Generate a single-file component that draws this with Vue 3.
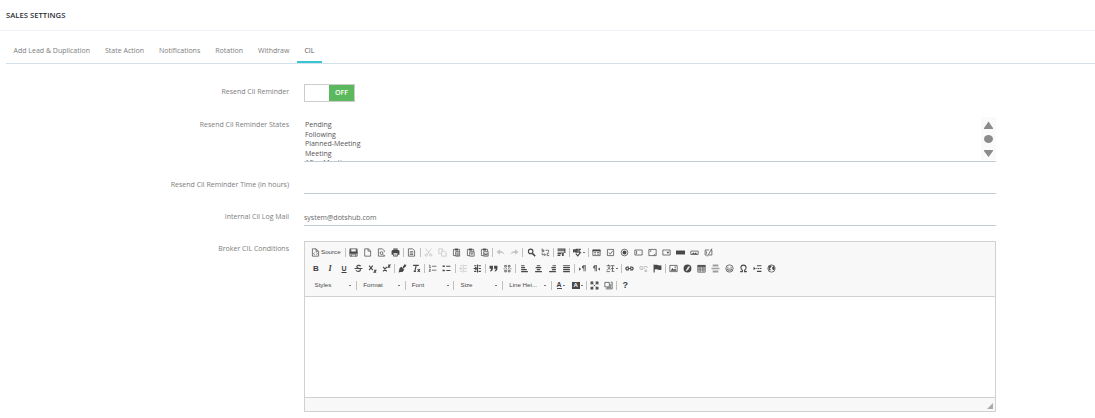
<script setup>
import { ref } from 'vue';

const tabs = ['Add Lead & Duplication', 'State Action', 'Notifications', 'Rotation', 'Withdraw', 'CIL'];
const activeTab = ref('CIL');
const states = ['Pending', 'Following', 'Planned-Meeting', 'Meeting', 'After-Meeting'];
const mail = ref('system@dotshub.com');

// s: stroked path, f: filled path, on a 16 unit grid
const icons = {
    source: { s: 'M9 1.5H2.5v13h11V6L9 1.5V6h4M6.5 8L4.5 10l2 2M9.5 8l2 2-2 2' },
    save: { s: 'M1.5 1.5h13v13h-13zM4 15v-4h8v4', f: 'M1 6h14v4H1zM2 2h2v4H2zM12 2h2v4h-2z' },
    newpage: { s: 'M3 1.5h6.5L13.5 5v9.5H3zM9 1.5V5.5h4' },
    preview: { s: 'M13 7V5L9.5 1.5h-7v13h11V13M10.5 9a2.5 2.5 0 1 1-5 0 2.5 2.5 0 0 1 5 0M10 11l3 3' },
    print: { s: 'M4.5 10v4.5h7V10M6 12.5h4', f: 'M4 1h8v2h-8zM1 5l2-1.5h10L15 5v7h-3V9.5H4V12H1z' },
    templates: { s: 'M2.5 1.5H10L13.5 5v9.5h-11zM5 6.5h6M5 9h6M5 11.5h6' },
    cut: { s: 'M3 1l7 10M13 1L6 11M6 12.5a2 2 0 1 1-4 0 2 2 0 0 1 4 0M14 12.5a2 2 0 1 1-4 0 2 2 0 0 1 4 0' },
    copy: { s: 'M5 10H1.5V1.5H8V5M6.5 5.5H12L14.5 8v6.5h-8z' },
    paste: { s: 'M5 2.5H2.5v11H6M11 2.5h2.5V6M6.5 6.5h7v8h-7zM8 9h4M8 11h4M8 13h4', f: 'M5 1h6v3.5H5z' },
    pastetext: { s: 'M5 2.5H2.5v11H6M11 2.5h2.5V6M6.5 6.5h8v8h-8zM8 9h5M10.5 9v4', f: 'M5 1h6v3.5H5z' },
    pasteword: { s: 'M5 2.5H2.5v11H6M11 2.5h2.5V6M6.5 6.5h8v8h-8zM8 9l1 4 1.5-3 1.5 3 1-4', f: 'M5 1h6v3.5H5z' },
    undo: { f: 'M1 7l6-5v3.5c4 0 7 2 8 6.5-2-2.5-4-3.5-8-3.5V12z' },
    redo: { f: 'M15 7L9 2v3.5C5 5.5 2 7.5 1 12c2-2.5 4-3.5 8-3.5V12z' },
    find: { s: 'M10.5 6a4 4 0 1 1-8 0 4 4 0 0 1 8 0', f: 'M8.5 10.5l2-2 5 5-2 2z', bold: true },
    replace: { s: 'M2 1v5.500h3V3.500H2M14.500 9h-3.500v4.500h3.500M2 8.500V12h5.500M5.500 9.500L8 12l-2.500 2.500M13.500 7V4H8' },
    selectall: { f: 'M1 1h14v2H1zM1 4h12v1.500H1zM1 6.500h12V8H1zM1 9h7v2H1zM1 12h5v2H1zM13 3h2v6h-2zM9 9h3v5H9z' },
    spell: { s: 'M1 8V3h3v5M1 5.500h3M6 2.500v5h2.500v-5zM14 2.500h-3v5h3M5 10l3.500 4L14 7' , bold: true },
    form: { s: 'M1.5 3.5h13v10h-13zM4 8h3M4 11h3M9 8h4M9 11h4', f: 'M1 3h14v3H1z' },
    checkbox: { s: 'M2.5 2.5h11v11h-11zM5 8l2.5 3L12 5' },
    radio: { s: 'M14 8A6 6 0 1 1 2 8a6 6 0 0 1 12 0', f: 'M11.5 8a3.5 3.5 0 1 1-7 0 3.5 3.5 0 0 1 7 0' },
    textfield: { s: 'M1.5 3.5h13v9h-13zM4.5 5v6' },
    textarea: { s: 'M1.5 2.5h13v11h-13zM4 7V5h2M13 10l-3 3' },
    select: { s: 'M1.5 3.5h13v9h-13z', f: 'M8 6.5h5L10.5 10z' },
    button: { f: 'M0 4.500h16v7H0z' },
    imagebutton: { s: 'M1.5 5.5h13v6h-13z', f: 'M3 11l3-3 2 2 2-2 3 3z' },
    hidden: { s: 'M9 3.5H2v9h4M12 3.5h2v9H9M14 1L6 15M4.500 6v4' },
    strike: { s: 'M12 4C10 1.5 4.5 2 5 5s7 2 6.5 5.5-6 3.5-8 .5M1 8h14', bold: true },
    subscript: { s: 'M2 3l6.500 8M8.5 3L2 11M11 11h3l-3 3.5h3.5', bold: true },
    superscript: { s: 'M2 5l6.500 8M8.5 5L2 13M11 2h3l-3 3.5h3.5', bold: true },
    copyformat: { s: 'M9 7l5.5-5.5', f: 'M6 5l5 5-3 4H5l-4 1 1-4 1-4zM12 0l3 3-5 5-2-2z' },
    removeformat: { s: 'M2 2.5h10M7.5 2.5L5 13M3 13h4M10 9l4 5M14 9l-4 5', bold: true },
    ol: { s: 'M2 2h1.5v4M2 6h3M2 9.5h2.5L2 13h3M7 4h8M7 11h8' },
    ul: { s: 'M7.5 4H15M7.5 11.5H15', f: 'M1 2.5h4v3H1zM1 10h4v3H1z', bold: true },
    outdent: { s: 'M2 3h4M9 3h5M2 13h4M9 13h5M7.500 1v14M1 8h4M9 8h5M4 5.5L1.5 8 4 10.5' },
    indent: { s: 'M2 3h4M10 3h4M2 13h4M10 13h4M8 1v14M1 8h5M10 8h4M4 5.5L6.5 8 4 10.5', bold: true },
    quote: { f: 'M1 3h6v5c0 3-2 5-5 5.5v-2c1.5-.5 2-1.5 2-3H1zM9 3h6v5c0 3-2 5-5 5.5v-2c1.5-.5 2-1.5 2-3H9z' },
    div: { s: 'M3 2.5h3v3H3zM9.500 2.5h3v3h-3zM3 11h3v3H3zM9.500 11h3v3h-3zM1 8.5h2M5 8.500h2M9 8.500h2M13 8.500h2' },
    left: { s: 'M2 3h6M2 6.5h7M2 10h10M2 13.5h12', bold: true },
    center: { s: 'M5 3h6M3 6.5h10M5 10h6M2 13.5h12', bold: true },
    right: { s: 'M8 3h6M6 6.5h8M7 10h7M2 13.5h12', bold: true },
    justify: { s: 'M2 3h12M2 6.5h12M2 10h12M2 13.5h12', bold: true },
    ltr: { s: 'M10.5 3v10M13 3v10M14 3H9', f: 'M10 2.5v6a3 3 0 0 1 0-6zM2 6l3.500 3L2 12z' },
    rtl: { s: 'M5.5 3v10M8 3v10M9 3H4', f: 'M5 2.5v6a3 3 0 0 1 0-6zM14 6l-3.500 3 3.500 3z' },
    language: { s: 'M1 3h7M4.5 1v3M7 4c-1 4-3 6-6 7M3 6l5 4M9 3h6M9 8h5M10 13h5M11.5 3v10M1 13.5h6' },
    link: { s: 'M7 5.500H4a2.500 2.500 0 0 0 0 5h3M9 5.500h3a2.500 2.500 0 0 1 0 5H9M5 8h6', bold: true },
    unlink: { s: 'M7 4.500H4a2.500 2.500 0 0 0 0 5h3M9 4.500h3a2.500 2.500 0 0 1 3 2.500M5 7h6M10 10l4 4M14 10l-4 4', bold: true },
    anchor: { f: 'M1 1h2v14H1zM3 2c4-2 6 2 12 0v8c-6 2-8-2-12 0z' },
    image: { s: 'M1.5 2.5h13v11h-13z', f: 'M3 12l3-5 2.5 3L11 8l2.5 4zM10 4.5h2v2h-2z' },
    flash: { f: 'M8 1a7 7 0 1 0 0 14A7 7 0 0 0 8 1zM12 4v2c-2 0-2 1-2.5 2H11v1.5H9c-1 2-2 3-4 3v-2c1.5 0 2-1.5 2.5-3C8.5 5 10 4 12 4z' },
    table: { s: 'M1.5 2.5h13v12h-13zM1.5 10.5h13M5.5 4v10M10.5 4v10M1.5 7h13', f: 'M1 2h14v3H1z' },
    rule: { f: 'M3 1h10v3.500H3zM1 6.500h14v3H1zM3 11.500h10V15H3z', soft: true },
    smiley: { s: 'M14.5 8a6.5 6.5 0 1 1-13 0 6.5 6.5 0 0 1 13 0M5 5v2M11 5v2M3.5 9h9c-1 4-8 4-9 0' },
    omega: { s: 'M2 13.5h4V11c-4-2.5-3.5-9 2-9s6 6.5 2 9v2.5h4', bold: true },
    pagebreak: { s: 'M7 3h8M7 13h8M6 8h2M9 8h2M12 8h3', f: 'M1 5l4 3-4 3z', bold: true },
    iframe: { s: 'M14.5 8a6.5 6.5 0 1 1-13 0 6.5 6.5 0 0 1 13 0', f: 'M2.500 5l4-3 2 1-1.500 3-2.500 1 2 2.500-1 3-2.500-3zM11 3l3 4-2 4-2-1-1-3z' },
    maximize: { s: 'M2 6V2h4M10 2h4v4M14 10v4h-4M6 14H2v-4M3 3l3 3M13 3l-3 3M3 13l3-3M13 13l-3-3M7 8h2', bold: true },
    blocks: { s: 'M1.5 2.5h8v8h-8zM12 2h2.5v12H3M12 5v7H5' },
};

const row1 = [
    ['save', 'newpage', 'preview', 'print'],
    ['templates'],
    ['cut*', 'copy*', 'paste', 'pastetext', 'pasteword'],
    ['undo*', 'redo*'],
    ['find', 'replace'],
    ['selectall'],
    ['spell+'],
    ['form', 'checkbox', 'radio', 'textfield', 'textarea', 'select', 'button', 'imagebutton', 'hidden'],
];
const row2 = [
    ['=B', '=I', '=U', 'strike', 'subscript', 'superscript'],
    ['copyformat', 'removeformat'],
    ['ol', 'ul'],
    ['outdent*', 'indent'],
    ['quote', 'div'],
    ['left', 'center', 'right', 'justify'],
    ['ltr', 'rtl', 'language+'],
    ['link', 'unlink*', 'anchor'],
    ['image', 'flash', 'table', 'rule', 'smiley', 'omega', 'pagebreak', 'iframe'],
];

// "*" marks a disabled button, "+" one with a menu, "=" a plain letter
function parse(groups) {
    return groups.map((group) => group.map((key) => ({
        key,
        letter: key[0] === '=' ? key[1] : '',
        icon: icons[key.replace(/[*+]/, '')],
        disabled: key.endsWith('*'),
        menu: key.endsWith('+'),
    })));
}

const toolbar = [parse(row1), parse(row2)];
const combos = ['Styles', 'Format', 'Font', 'Size', 'Line Hei...'];
</script>

<template>
    <div class="page">
        <header class="title">SALES SETTINGS</header>
        <nav class="tabs">
            <a
                v-for="tab in tabs"
                :key="tab"
                :class="['tab', { 'tab--active': tab === activeTab }]"
                @click="activeTab = tab"
            >{{ tab }}</a>
        </nav>

        <div class="row row--toggle">
            <label class="label">Resend Cil Reminder</label>
            <div class="toggle"><span class="toggle-off">OFF</span></div>
        </div>

        <div class="row row--states">
            <label class="label">Resend Cil Reminder States</label>
            <div class="states">
                <div class="options">
                    <div v-for="state in states" :key="state" class="option">{{ state }}</div>
                </div>
                <svg class="scroller" viewBox="0 0 15 43" width="15" height="43">
                    <path d="M7.5 4.5L12 11v1H3v-1zM7.5 40L12 34v-1H3v1z" />
                    <ellipse cx="7.5" cy="22" rx="4.5" ry="4" />
                </svg>
            </div>
        </div>

        <div class="row row--time">
            <label class="label">Resend Cil Reminder Time (in hours)</label>
            <div class="input"></div>
        </div>

        <div class="row row--mail">
            <label class="label">Internal Cil Log Mail</label>
            <div class="input">{{ mail }}</div>
        </div>

        <div class="row row--editor">
            <label class="label">Broker CIL Conditions</label>
            <div class="editor">
                <div class="toolbar">
                    <div v-for="(groups, r) in toolbar" :key="r" class="tools">
                        <template v-if="r === 0">
                            <span class="source">
                                <svg class="icon" viewBox="0 0 16 16"><path class="stroke" :d="icons.source.s" /></svg>
                                Source
                            </span>
                            <i class="sep"></i>
                        </template>
                        <template v-for="(group, g) in groups" :key="g">
                            <i v-if="g" class="sep"></i>
                            <span
                                v-for="tool in group"
                                :key="tool.key"
                                :class="['tool', { 'tool--disabled': tool.disabled, 'tool--menu': tool.menu }]"
                            >
                                <b v-if="tool.letter" :class="`letter letter--${tool.letter}`">{{ tool.letter }}</b>
                                <svg v-else :class="['icon', { 'icon--soft': tool.icon.soft }]" viewBox="0 0 16 16">
                                    <path v-if="tool.icon.s" :class="['stroke', { 'stroke--bold': tool.icon.bold }]" :d="tool.icon.s" />
                                    <path v-if="tool.icon.f" fill-rule="evenodd" :d="tool.icon.f" />
                                </svg>
                                <i v-if="tool.menu" class="caret"></i>
                            </span>
                        </template>
                    </div>
                    <div class="tools">
                        <template v-for="combo in combos" :key="combo">
                            <span class="combo">{{ combo }}<i class="caret"></i></span>
                            <i class="sep"></i>
                        </template>
                        <span class="tool tool--menu"><b class="letter letter--color">A</b><i class="caret"></i></span>
                        <span class="tool tool--menu"><b class="letter letter--bg">A</b><i class="caret"></i></span>
                        <i class="sep"></i>
                        <span class="tool">
                            <svg class="icon" viewBox="0 0 16 16"><path class="stroke stroke--bold" :d="icons.maximize.s" /></svg>
                        </span>
                        <span class="tool">
                            <svg class="icon" viewBox="0 0 16 16"><path class="stroke" :d="icons.blocks.s" /></svg>
                        </span>
                        <i class="sep"></i>
                        <span class="tool"><b class="letter letter--help">?</b></span>
                    </div>
                </div>
                <div class="content"></div>
                <div class="bottom">
                    <svg viewBox="0 0 6 6" width="6" height="6"><path d="M6 0v6H0z" /></svg>
                </div>
            </div>
        </div>
    </div>
</template>

<style>
body {
    background: #fff;
}
</style>

<style scoped>
.page {
    box-sizing: border-box;
    width: 1095px;
    height: 418px;
    overflow: hidden;

    font-family: 'Open Sans', sans-serif;
    font-size: 7px;
    line-height: 10px;
    color: #666;
}

.title {
    box-sizing: border-box;
    height: 31px;
    padding: 10px 6px;
    border-bottom: 1px solid #eef1f5;

    font-size: 7.7px;
    font-weight: 600;
    color: #2b2f36;
}

.tabs {
    box-sizing: border-box;
    display: flex;
    height: 33px;
    margin-left: 6px;
    padding-top: 9px;
    border-bottom: 1px solid #d5e1ea;
}

.tab {
    box-sizing: border-box;
    height: 24px;
    padding: 6px 7.5px 0;
    white-space: nowrap;
    color: #7d7d7d;
}

.tab--active {
    height: 23px;
    border-bottom: 2px solid #36c6d3;
    color: #555;
}

.row {
    display: grid;
    grid-template-columns: 289px 692px;
    column-gap: 15px;
    align-items: start;
}

.row--toggle {
    height: 33px;
    padding-top: 20px;
}

.row--states {
    height: 45px;
}

.row--time,
.row--mail {
    height: 32px;
}

.row--editor {
    padding-top: 15px;
}

.label {
    padding-top: 3px;
    text-align: right;
    white-space: nowrap;
    color: #7d7d7d;
}

.row--time .label,
.row--mail .label {
    padding-top: 18px;
}

.toggle {
    box-sizing: border-box;
    display: flex;
    justify-content: flex-end;
    width: 51px;
    height: 18px;
    border: 1px solid #ccc;
}

.toggle-off {
    width: 25px;
    line-height: 16px;
    text-align: center;
    font-size: 7px;
    font-weight: 600;
    color: #fff;
    background: #5cb85c;
}

.states {
    box-sizing: border-box;
    display: flex;
    justify-content: space-between;
    height: 45px;
    overflow: hidden;
    border-bottom: 1px solid #c2cad8;
}

.options {
    padding: 3px 1px 0;
}

.option {
    height: 9.6px;
    color: #555;
}

.scroller {
    background: #fafafa;
    fill: #8b8b8b;
}

.input {
    box-sizing: border-box;
    height: 32px;
    padding-top: 19px;
    border-bottom: 1px solid #c2cad8;
}

.editor {
    box-sizing: border-box;
    height: 171px;
    border: 1px solid #d1d1d1;
}

.toolbar {
    box-sizing: border-box;
    height: 55px;
    padding: 2px 4px 0;
    border-bottom: 1px solid #d1d1d1;
    background: #f8f8f8;
}

.tools {
    display: flex;
    align-items: center;
    height: 16.5px;

    font-family: 'Liberation Sans', Arial, sans-serif;
    font-size: 6.2px;
    color: #484848;
}

.source {
    display: flex;
    gap: 1px;
    align-items: center;
    width: 33px;
    padding-left: 2px;
}

.tool {
    display: flex;
    align-items: center;
    justify-content: center;
    width: 14.02px;
}

.tool--menu {
    gap: 1px;
    width: 16.5px;
}

.tool--disabled {
    opacity: 0.3;
}

.icon {
    flex: none;
    width: 9px;
    height: 9px;
    fill: #484848;
}

.icon--soft {
    opacity: 0.5;
}

.stroke {
    fill: none;
    stroke: #484848;
    stroke-width: 1.3;
}

.stroke--bold {
    stroke-width: 2;
}

.letter {
    font-size: 8px;
    line-height: 8px;
    color: #404040;
}

.letter--I {
    font-family: 'Liberation Serif', serif;
    font-style: italic;
}

.letter--U {
    font-size: 7px;
    text-decoration: underline;
}

.letter--color {
    border-bottom: 1px solid #484848;
    font-size: 7px;
    line-height: 6px;
}

.letter--bg {
    width: 8px;
    text-align: center;
    font-size: 6px;
    line-height: 7px;
    color: #fff;
    background: #484848;
}

.letter--help {
    font-size: 9px;
}

.caret {
    flex: none;
    width: 2px;
    height: 1px;
    background: #777;
}

.sep {
    flex: none;
    width: 1px;
    height: 9px;
    margin: 0 0.7px;
    background: #c0c0c0;
}

.combo {
    box-sizing: border-box;
    display: flex;
    align-items: center;
    justify-content: space-between;
    width: 46.3px;
    padding: 0 4px 0 5.5px;
}

.content {
    height: 100px;
}

.bottom {
    box-sizing: border-box;
    display: flex;
    align-items: flex-end;
    justify-content: flex-end;
    height: 14px;
    padding: 2px;
    border-top: 1px solid #d1d1d1;
    background: #f8f8f8;
}

.bottom svg {
    fill: #aaa;
}
</style>
